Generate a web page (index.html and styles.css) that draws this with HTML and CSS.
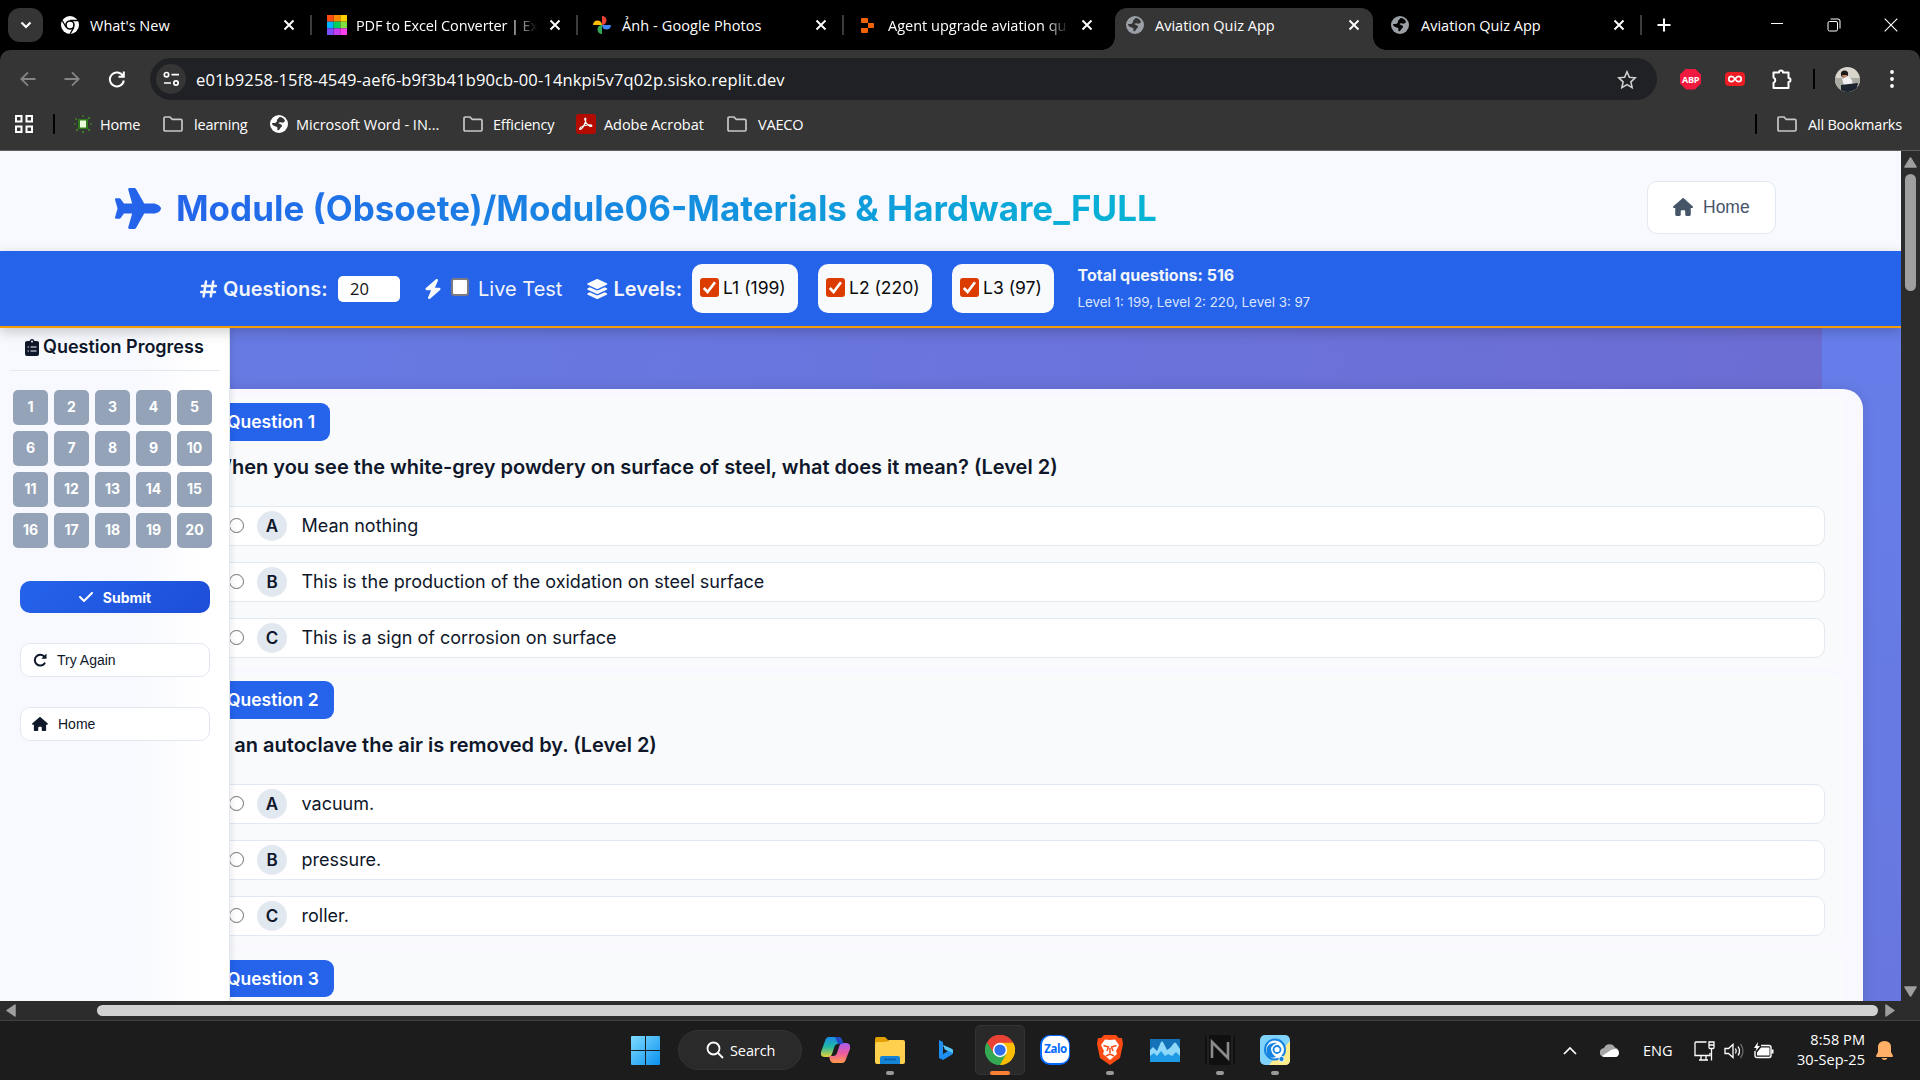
FILE: index.html
```html
<!DOCTYPE html>
<html lang="en">
<head>
<meta charset="utf-8">
<title>Aviation Quiz App</title>
<link rel="stylesheet" href="styles.css">
</head>
<body>
<svg class="defs" width="0" height="0">
  <defs>
    <symbol id="close" viewBox="0 0 12 12"><path d="M1.5 1.5l9 9M10.5 1.5l-9 9" stroke="currentColor" stroke-width="1.9" fill="none"/></symbol>
    <symbol id="folder" viewBox="0 0 20 16"><path d="M1 2.2Q1 1 2.2 1H7l2.2 2.3h8.6Q19 3.300 19 4.500V13.700Q19 15 17.800 15H2.200Q1 15 1 13.700Z" fill="none" stroke="#c7c7c7" stroke-width="1.7"/></symbol>
    <symbol id="globe" viewBox="0 0 18 18"><circle cx="9" cy="9" r="9" fill="currentColor"/><path d="M9.500 2c3 0 5 2 5.500 4-1 1.500-2.500 2-3.500 1.500S9 7 8.500 8c0 1 3 .8 3.500 2.500.3 1.500-1.500 1.800-2 3-.4 1.200-1.300 2-2.500 1.800C7 14 8 13 7 12c-1.500-1-4-1-5-3 0-1.500 1-1 2.500-1S7 7 7 5.500 8 4 9.500 2z" fill="var(--cut)"/></symbol>
    <symbol id="plane" viewBox="0 0 576 512"><path fill="currentColor" d="M482.3 192c34.2 0 93.7 29 93.7 64c0 36-59.5 64-93.7 64l-116.6 0L265.2 495.900c-5.700 10-16.300 16.100-27.800 16.100l-56.200 0c-10.600 0-18.300-10.200-15.400-20.400l49-171.600L112 320 68.800 377.600c-3 4-7.800 6.400-12.800 6.400l-42 0c-7.800 0-14-6.300-14-14c0-1.300 .2-2.600 .5-3.900L32 256 .5 145.900c-.4-1.300-.5-2.600-.5-3.900c0-7.800 6.300-14 14-14l42 0c5 0 9.800 2.400 12.800 6.400L112 192l102.900 0-49-171.600C162.900 10.200 170.600 0 181.200 0l56.200 0c11.500 0 22.100 6.200 27.800 16.100L365.700 192l116.600 0z"/></symbol>
    <symbol id="house" viewBox="0 0 576 512"><path fill="currentColor" d="M575.8 255.500c0 18-15 32.100-32 32.100h-32l.7 160.200c0 2.700-.2 5.400-.5 8.100V472c0 22.100-17.900 40-40 40H392c-22.100 0-40-17.900-40-40V384c0-17.700-14.300-32-32-32H256c-17.700 0-32 14.300-32 32v88c0 22.100-17.900 40-40 40H104c-22.100 0-40-17.900-40-40V287.600H32c-18 0-32-14-32-32.100c0-9 3-17 10-24L266.400 8c7-7 15-8 22-8s15 2 21 7L564.800 231.500c8 7 12 15 11 24z"/></symbol>
    <symbol id="check" viewBox="0 0 448 512"><path fill="currentColor" d="M438.600 105.400c12.500 12.500 12.500 32.800 0 45.300l-256 256c-12.500 12.500-32.800 12.500-45.300 0l-128-128c-12.500-12.500-12.500-32.800 0-45.300s32.800-12.500 45.300 0L160 338.700 393.400 105.400c12.500-12.500 32.800-12.500 45.300 0z"/></symbol>
    <symbol id="tick" viewBox="0 0 19 19"><rect width="19" height="19" rx="3" fill="#dc3c00"/><path d="M3.800 10l3.800 4L15 4.300" fill="none" stroke="#fff" stroke-width="2.700"/></symbol>
    <symbol id="chrome" viewBox="0 0 48 48"><path d="M24 24L3.200 12A24 24 0 0 1 44.800 12Z" fill="#ea4335"/><path d="M24 24L44.800 12A24 24 0 0 1 24 48Z" fill="#fbbc04"/><path d="M24 24V48A24 24 0 0 1 3.200 12Z" fill="#34a853"/><path d="M24 12.500H45A24 24 0 0 0 3.200 12L14 30Z" fill="#ea4335"/><path d="M34 30L24 48A24 24 0 0 0 45 12.500H24Z" fill="#fbbc04"/><path d="M14 30L3.200 12A24 24 0 0 0 24 48L34 30Z" fill="#34a853"/><circle cx="24" cy="24" r="11.500" fill="#fff"/><circle cx="24" cy="24" r="9" fill="#2f6fed"/></symbol>
  </defs>
</svg>

<div class="browser">
  <div class="tabstrip">
    <button class="tab-search"><svg width="12" height="8" viewBox="0 0 12 8"><path d="M1.500 1.500L6 6l4.500-4.500" fill="none" stroke="#fff" stroke-width="2.200"/></svg></button>
    <div class="tab"><svg class="fav" viewBox="0 0 18 18"><circle cx="9" cy="9" r="9" fill="#fff"/><path d="M9 4.500h8M5.100 11.300L1.200 4.500M12.900 11.300L9 18" stroke="#000" stroke-width="1.300"/><circle cx="9" cy="9" r="4" fill="#fff" stroke="#000" stroke-width="1.600"/></svg><span class="name">What's New</span><svg class="x"><use href="#close"/></svg></div>
    <div class="tab"><svg class="fav wide" viewBox="0 0 3 3"><path fill="#ff4a12" d="M0 0h1v1H0z"/><path fill="#ff8a00" d="M1 0h1v1H1z"/><path fill="#ffd000" d="M2 0h1v1H2z"/><path fill="#00b4ff" d="M0 1h1v1H0z"/><path fill="#00d060" d="M1 1h1v1H1z"/><path fill="#80e040" d="M2 1h1v1H2z"/><path fill="#7a4dff" d="M0 2h1v1H0z"/><path fill="#c53df0" d="M1 2h1v1H1z"/><path fill="#ff40f0" d="M2 2h1v1H2z"/></svg><span class="name fade pdf">PDF to Excel Converter | Ex</span><svg class="x"><use href="#close"/></svg></div>
    <div class="tab"><svg class="fav" viewBox="0 0 18 18"><path fill="#ea4335" d="M9 0a4.500 4.500 0 0 1 0 9z"/><path fill="#4285f4" d="M18 9a4.500 4.500 0 0 1-9 0z"/><path fill="#34a853" d="M9 18a4.500 4.500 0 0 1 0-9z"/><path fill="#fbbc04" d="M0 9a4.500 4.500 0 0 1 9 0z"/></svg><span class="name photos">Ảnh - Google Photos</span><svg class="x"><use href="#close"/></svg></div>
    <div class="tab last"><svg class="fav" viewBox="0 0 18 18"><path fill="#f26207" d="M3 2h5q1 0 1 1v4H3q-1 0-1-1V3q0-1 1-1zM9 7h5q1 0 1 1v3q0 1-1 1H9zM2 12h7v4q0 1-1 1H3q-1 0-1-1z"/></svg><span class="name fade">Agent upgrade aviation qu</span><svg class="x"><use href="#close"/></svg></div>
    <div class="tab active"><svg class="fav gray"><use href="#globe"/></svg><span class="name">Aviation Quiz App</span><svg class="x"><use href="#close"/></svg></div>
    <div class="tab"><svg class="fav gray dark"><use href="#globe"/></svg><span class="name inset">Aviation Quiz App</span><svg class="x"><use href="#close"/></svg></div>
    <svg class="plus" width="14" height="14" viewBox="0 0 14 14"><path d="M7 .5v13M.5 7h13" stroke="#fff" stroke-width="2"/></svg>
    <div class="winctl">
      <svg width="14" height="14" viewBox="0 0 14 14"><path d="M1 5.500h12" stroke="#fff"/></svg>
      <svg width="14" height="14" viewBox="0 0 14 14"><rect x="1" y="3.500" width="9.500" height="9.500" rx="1.500" fill="none" stroke="#fff"/><path d="M3.500 1h7.500q2 0 2 2v7.500" fill="none" stroke="#fff"/></svg>
      <svg width="14" height="14" viewBox="0 0 14 14"><path d="M.7.7l12.600 12.600M13.300.7L.7 13.300" stroke="#fff" stroke-width="1.100"/></svg>
    </div>
  </div>

  <div class="toolbar">
    <div class="nav">
      <svg width="16" height="16" viewBox="0 0 16 16"><path d="M15.500 8H1.500M8 1.300L1.300 8 8 14.700" fill="none" stroke="#858585" stroke-width="1.800"/></svg>
      <svg width="16" height="16" viewBox="0 0 16 16"><path d="M.5 8h14M8 1.300L14.700 8 8 14.700" fill="none" stroke="#858585" stroke-width="1.800"/></svg>
      <svg width="18" height="18" viewBox="0 0 18 18"><path d="M15 6A7 7 0 1 0 15.800 10.500M15.800 1.500V6.700H10.500" fill="none" stroke="#fff" stroke-width="2"/></svg>
    </div>
    <div class="omnibox">
      <span class="siteinfo"><svg width="17" height="16" viewBox="0 0 17 16"><g fill="none" stroke="#fff" stroke-width="1.700"><circle cx="3.500" cy="3.700" r="2.200"/><path d="M8.500 3.700H16M1 12H8"/><circle cx="13" cy="12" r="2.200"/></g></svg></span>
      <span class="url">e01b9258-15f8-4549-aef6-b9f3b41b90cb-00-14nkpi5v7q02p.sisko.replit.dev</span>
      <svg class="star" width="20" height="19" viewBox="0 0 20 19"><path d="M10 1.800l2.400 5.400 5.900.6-4.400 4 1.200 5.800L10 14.600l-5.100 3 1.200-5.800-4.400-4 5.900-.6z" fill="none" stroke="#d0d0d0" stroke-width="1.600"/></svg>
    </div>
    <div class="ext">
      <span class="abp">ABP</span>
      <span class="inf"><svg width="14" height="8" viewBox="0 0 14 8"><path d="M7 4C5.500 2 4.800 1.300 3.500 1.300a2.600 2.600 0 0 0 0 5.400C4.800 6.700 5.500 6 7 4s2.200-2.700 3.500-2.700a2.600 2.600 0 0 1 0 5.400C9.200 6.700 8.500 6 7 4z" fill="none" stroke="#fff" stroke-width="1.700"/></svg></span>
      <svg class="puzzle" width="22" height="22" viewBox="0 0 22 22"><path d="M2.500 4.500h5.500a2 2 0 0 1 4 0h5.500v5.500a2 2 0 0 1 0 4v6h-15v-5a3 3 0 0 0 0-5.500z" fill="none" stroke="#fff" stroke-width="2" stroke-linejoin="round"/></svg>
      <i class="vline"></i>
      <svg class="avatar" width="25" height="25" viewBox="0 0 25 25"><clipPath id="av"><circle cx="12.500" cy="12.500" r="12.500"/></clipPath><g clip-path="url(#av)"><path fill="#d8d5cd" d="M0 0h25v25H0z"/><path fill="#a9aba3" d="M0 11h25v14H0z"/><circle cx="9.500" cy="7" r="3.600" fill="#1d1815"/><path d="M7 8h5l1 5-4 2z" fill="#b98667"/><path d="M7 12l6-3 4 4 1 6-8 2z" fill="#f1f1f1"/><path d="M6 18l8-1 9-1-2 9H6z" fill="#1c2430"/></g></svg>
      <svg class="dots" width="4" height="20" viewBox="0 0 4 20"><g fill="#fff"><circle cx="2" cy="3" r="1.900"/><circle cx="2" cy="10" r="1.900"/><circle cx="2" cy="17" r="1.900"/></g></svg>
    </div>
  </div>

  <div class="bookmarks">
    <svg class="apps" width="18" height="18" viewBox="0 0 18 18"><g fill="none" stroke="#fff" stroke-width="2"><path d="M1 1h5.500v5.500H1zM11.500 1H17v5.500h-5.500zM1 11.500h5.500V17H1zM11.500 11.500H17V17h-5.500z"/></g></svg>
    <i class="vline"></i>
    <span class="bm b-home"><svg width="20" height="20" viewBox="0 0 20 20"><g fill="#3f7d29"><circle cx="3" cy="5" r="1.100"/><circle cx="10" cy="2" r=".9"/><circle cx="16" cy="4" r="1.200"/><circle cx="18" cy="10" r=".9"/><circle cx="16" cy="16" r="1.200"/><circle cx="10" cy="18" r="1.200"/><circle cx="4" cy="16" r="1.200"/><circle cx="2" cy="10" r=".9"/></g><path fill="#2f7a1a" d="M5 5h10v10H5z"/><path fill="#eaffd9" d="M7 6.500h6v7H7z"/></svg>Home</span>
    <span class="bm b-learn"><svg width="20" height="16"><use href="#folder"/></svg>learning</span>
    <span class="bm b-word"><svg class="white" width="18" height="18"><use href="#globe"/></svg>Microsoft Word - IN...</span>
    <span class="bm b-eff"><svg width="20" height="16"><use href="#folder"/></svg>Efficiency</span>
    <span class="bm b-adobe"><svg width="20" height="20" viewBox="0 0 20 20"><rect width="20" height="20" rx="3" fill="#b30b00"/><path d="M4.300 15.500c1.500 0 5.500-6 5.500-10 0-2-1.300-1.500-1 0 .7 4 4.500 7.500 6.700 6.700 1.300-.7-1-1.700-4-1.200-3 .4-7 2-7.700 3.400-.3.700 0 1.100.5 1.100z" fill="none" stroke="#fff" stroke-width="1.200"/></svg>Adobe Acrobat</span>
    <span class="bm b-vaeco"><svg width="20" height="16"><use href="#folder"/></svg>VAECO</span>
    <span class="allbm"><i class="vline"></i><svg width="20" height="16"><use href="#folder"/></svg><span>All Bookmarks</span></span>
  </div>
</div>

<div class="viewport">
  <div class="page">
    <header class="hero">
      <svg class="plane"><use href="#plane"/></svg>
      <h1>Module (Obsoete)/Module06-Materials &amp; Hardware_FULL</h1>
      <a class="homebtn"><svg width="20" height="18"><use href="#house"/></svg>Home</a>
    </header>

    <div class="controls">
      <svg class="hash" width="17" height="18" viewBox="0 0 17 18"><path d="M6 1.500L3.600 16.500M13.200 1.500L10.800 16.500M2 6h14M1 12h14" stroke="#f1f5f9" stroke-width="2.500" stroke-linecap="round"/></svg>
      <b class="lbl q">Questions:</b>
      <span class="num">20</span>
      <svg class="bolt" width="18" height="20" viewBox="0 0 448 512"><path fill="#f8fafc" d="M349.400 44.600c5.900-13.700 1.500-29.700-10.600-38.500s-28.600-8-39.900 1.800l-256 224C32.900 240.600 29.300 254.500 34 266.700S50.900 288 64 288h111.500L98.600 467.400c-5.900 13.700-1.500 29.700 10.600 38.500s28.600 8 39.900-1.800l256-224c10-8.800 13.600-22.600 8.900-34.900S397.100 224 384 224H272.500L349.400 44.600z"/></svg>
      <span class="box"></span>
      <span class="lbl live">Live Test</span>
      <svg class="layers" width="22.500" height="20" viewBox="0 0 576 512"><path fill="#f8fafc" d="M264.500 5.200c14.900-6.900 32.100-6.900 47 0l218.600 101c8.500 3.900 13.900 12.400 13.900 21.800s-5.400 17.900-13.900 21.800l-218.600 101c-14.900 6.900-32.100 6.900-47 0L45.900 149.800C37.400 145.800 32 137.300 32 128s5.400-17.900 13.900-21.800L264.500 5.200zM476.900 209.600l53.200 24.600c8.500 3.900 13.900 12.400 13.900 21.800s-5.400 17.900-13.900 21.800l-218.600 101c-14.900 6.900-32.100 6.900-47 0L45.900 277.800C37.400 273.800 32 265.300 32 256s5.400-17.900 13.900-21.800l53.200-24.600 152 70.200c23.400 10.800 50.400 10.800 73.800 0l152-70.200zm-152 198.200l152-70.200 53.200 24.600c8.500 3.900 13.900 12.400 13.900 21.800s-5.400 17.900-13.900 21.800l-218.600 101c-14.900 6.900-32.100 6.900-47 0L45.900 405.800C37.400 401.800 32 393.300 32 384s5.400-17.900 13.900-21.800l53.200-24.600 152 70.200c23.400 10.800 50.400 10.800 73.800 0z"/></svg>
      <b class="lbl lv">Levels:</b>
      <span class="level l1"><svg width="19" height="19"><use href="#tick"/></svg>L1 (199)</span>
      <span class="level l2"><svg width="19" height="19"><use href="#tick"/></svg>L2 (220)</span>
      <span class="level l3"><svg width="19" height="19"><use href="#tick"/></svg>L3 (97)</span>
      <div class="totals"><b>Total questions: 516</b><small>Level 1: 199, Level 2: 220, Level 3: 97</small></div>
    </div>

    <div class="body">
      <aside class="sidebar">
        <h2><svg width="14" height="18" viewBox="0 0 14 18"><path d="M2 3h2.500a2.600 2.600 0 0 1 5 0H12q2 0 2 2v11q0 2-2 2H2q-2 0-2-2V5q0-2 2-2z" fill="#0f172a"/><circle cx="7" cy="3.400" r="1" fill="#f8f9fe"/><path d="M5.500 9h6M5.500 13h6M2.600 9h1.300M2.600 13h1.300" stroke="#f8f9fe" stroke-width="1.100"/></svg>Question Progress</h2>
        <div class="grid">
          <span>1</span><span>2</span><span>3</span><span>4</span><span>5</span>
          <span>6</span><span>7</span><span>8</span><span>9</span><span>10</span>
          <span>11</span><span>12</span><span>13</span><span>14</span><span>15</span>
          <span>16</span><span>17</span><span>18</span><span>19</span><span>20</span>
        </div>
        <button class="submit"><svg width="14" height="16"><use href="#check"/></svg>Submit</button>
        <button class="side again"><svg width="14" height="14" viewBox="0 0 14 14"><path d="M11.600 10.300A5.400 5.400 0 1 1 11 3.300" fill="none" stroke="#0f172a" stroke-width="2" stroke-linecap="round"/><path d="M13.500.6v5.200H8.300z" fill="#0f172a"/></svg>Try Again</button>
        <button class="side"><svg width="16" height="14"><use href="#house"/></svg>Home</button>
      </aside>
      <main class="main">
        <div class="band"></div>
        <div class="card">
          <section class="question">
            <span class="badge">Question 1</span>
            <h3>When you see the white-grey powdery on surface of steel, what does it mean? (Level 2)</h3>
            <div class="opt"><i class="radio"></i><b>A</b>Mean nothing</div>
            <div class="opt"><i class="radio"></i><b>B</b>This is the production of the oxidation on steel surface</div>
            <div class="opt"><i class="radio"></i><b>C</b>This is a sign of corrosion on surface</div>
          </section>
          <section class="question">
            <span class="badge">Question 2</span>
            <h3>In an autoclave the air is removed by. (Level 2)</h3>
            <div class="opt"><i class="radio"></i><b>A</b>vacuum.</div>
            <div class="opt"><i class="radio"></i><b>B</b>pressure.</div>
            <div class="opt"><i class="radio"></i><b>C</b>roller.</div>
          </section>
          <section class="question">
            <span class="badge">Question 3</span>
          </section>
        </div>
      </main>
    </div>
  </div>
  <div class="vscroll">
    <svg width="13" height="11" viewBox="0 0 13 11"><path d="M6.500 1L12 10H1z" fill="#9f9f9f" stroke="#9f9f9f" stroke-linejoin="round" stroke-width="1.500"/></svg>
    <i></i>
    <svg class="dn" width="13" height="11" viewBox="0 0 13 11"><path d="M6.500 10L12 1H1z" fill="#9f9f9f" stroke="#9f9f9f" stroke-linejoin="round" stroke-width="1.500"/></svg>
  </div>
</div>
<div class="hscroll">
  <svg width="10" height="13" viewBox="0 0 10 13"><path d="M1 6.500L9 1v11z" fill="#9f9f9f" stroke="#9f9f9f" stroke-linejoin="round" stroke-width="1.500"/></svg>
  <i></i>
  <svg width="10" height="13" viewBox="0 0 10 13"><path d="M9 6.500L1 1v11z" fill="#9f9f9f" stroke="#9f9f9f" stroke-linejoin="round" stroke-width="1.500"/></svg>
</div>

<footer class="taskbar">
  <div class="apps-row">
    <svg class="win" width="29" height="29" viewBox="0 0 29 29"><linearGradient id="w" x1="0" y1="0" x2="1" y2="1" gradientUnits="objectBoundingBox"><stop offset="0" stop-color="#7fdcff"/><stop offset="1" stop-color="#0a90ee"/></linearGradient><path fill="url(#w)" d="M1 0h13v14H0V1q0-1 1-1zM15 0h13q1 0 1 1v13H15zM0 15h14v14H1q-1 0-1-1zM15 15h14v13q0 1-1 1H15z"/></svg>
    <div class="search"><svg width="18" height="18" viewBox="0 0 18 18"><circle cx="7.500" cy="7.500" r="6" fill="none" stroke="#fff" stroke-width="1.800"/><path d="M12 12l5 5" stroke="#fff" stroke-width="1.800"/></svg>Search</div>
    <span class="app"><svg width="29" height="26" viewBox="0 0 29 26"><linearGradient id="c1" x1="0" y1="0" x2="0" y2="1"><stop offset="0" stop-color="#1a8be8"/><stop offset=".5" stop-color="#22b8a0"/><stop offset="1" stop-color="#e8d23a"/></linearGradient><linearGradient id="c2" x1="0" y1="0" x2="0" y2="1"><stop offset="0" stop-color="#a95cf0"/><stop offset=".5" stop-color="#ec5aa0"/><stop offset="1" stop-color="#ff9a4a"/></linearGradient><path d="M8 0h9q3 0 4 3l1 4h-5q-3 0-4 4l-2 6q-1 3-4 3H4q-5 0-4-5L4 4q1-4 4-4z" fill="url(#c1)"/><path d="M21 26h-9q-2 0-3-3l-1-4h4q3 0 4-3l2-6q1-4 4-4h3q5 0 4 6l-4 10q-1 4-4 4z" fill="url(#c2)"/><path d="M14 0h3q3 0 4 3l1 4h-5z" fill="#2149c4"/></svg></span>
    <span class="app run"><svg width="30" height="27" viewBox="0 0 30 27"><path d="M0 2q0-2 2-2h8l3 3-2 5H0z" fill="#e2a100"/><path d="M2 5h9l3-2h14q2 0 2 2v20q0 2-2 2H2q-2 0-2-2V7q0-2 2-2z" fill="#ffd04d"/><path d="M7 19h16q2 0 2 2v6H5v-6q0-2 2-2z" fill="#1583d6"/><path d="M9 22.500h12" stroke="#0b5fa8" stroke-width="1.500"/></svg></span>
    <span class="app"><svg width="15" height="21" viewBox="0 0 15 21"><path d="M1 0l4 2v12l5-3-3-1.500L5 5l9 4q1 .5 1 2v2q0 1-1 1.600L5 20 1 18z" fill="#1e8ff0"/><path d="M5 5l9 4q1 .5 1 2v2l-8-3.500z" fill="#59c6f2"/></svg></span>
    <span class="app current"><svg width="30" height="30"><use href="#chrome"/></svg></span>
    <span class="app"><span class="zalo">Zalo</span></span>
    <span class="app run"><svg width="26" height="30" viewBox="0 0 26 30"><path d="M7 0h12l3 3 3 0 1 6-3 14-10 7-10-7L0 9l1-6h3z" fill="#fb4b14"/><path d="M13 5l5-.5 4 5.500-3 6 1 3-7 6-7-6 1-3-3-6 4-5.500z" fill="#fff"/><path d="M6.500 10.500l5 1.500-1.500 4M19.500 10.500l-5 1.500 1.500 4M13 13v5M9 21l4-2 4 2" fill="none" stroke="#fb4b14" stroke-width="1.500"/></svg></span>
    <span class="app"><svg width="30" height="23" viewBox="0 0 30 23"><path fill="#1472b8" d="M0 0h30v23H0z"/><path d="M0 11l3-3 4 4 4-9q1-1 2 0l4 8 3-2 4-5q1-1 2 0l4 6v13H0z" fill="#8ed8fa"/><path d="M0 17l4-3 3 3 4-5 4 5 3-2 4 2 4-4 4 4v6H0z" fill="#1e9be4"/></svg></span>
    <span class="app run"><svg width="30" height="30" viewBox="0 0 30 30"><rect width="30" height="30" rx="3" fill="#101010"/><path d="M3 0v30M27 0v30" stroke="#333"/><path d="M7 23V7l16 16V7" fill="none" stroke="#8b8b8b" stroke-width="2.600"/></svg></span>
    <span class="app run"><svg width="30" height="30" viewBox="0 0 30 30"><rect width="30" height="30" rx="5" fill="#7fd3fb"/><path d="M30 6v19q0 5-5 5H9z" fill="#ffec8a"/><circle cx="15" cy="14.500" r="10" fill="#fff" stroke="#1683e0" stroke-width="2"/><path d="M8 21q-4-8 2-12 5-2 7-1-4 1-6 5 0 6 5 9-5 2-8-1z" fill="#1683e0"/><circle cx="17" cy="14.500" r="3.500" fill="none" stroke="#1683e0" stroke-width="1.800"/><circle cx="21.500" cy="24" r="2.700" fill="#1683e0" stroke="#fff"/></svg></span>
  </div>
  <div class="tray">
    <svg class="t-chev" width="14" height="9" viewBox="0 0 14 9"><path d="M1 8l6-6 6 6" fill="none" stroke="#fff" stroke-width="1.700"/></svg>
    <svg class="t-cloud" width="20" height="13" viewBox="0 0 20 13"><path d="M4.500 13A4.500 4.500 0 0 1 4 4a6 6 0 0 1 11-.5 5 5 0 0 1 .5 9.500z" fill="#a6a6a6"/><path d="M2 12l9-6q3-1.500 5-1a4.200 4.200 0 0 1 0 8H4.500Q3 13 2 12z" fill="#fff"/></svg>
    <span class="eng">ENG</span>
    <svg class="t-net" width="21" height="20" viewBox="0 0 21 20"><path d="M12.500 1H2Q1 1 1 2v12.500h15V12M5 19h9M7 15v4M12 15v4" fill="none" stroke="#fff" stroke-width="1.300"/><path d="M15 1h5v5.500q0 1-1 1h-3q-1 0-1-1zM15 4h5M17.500 7.500V19.500" fill="none" stroke="#fff" stroke-width="1.300"/></svg>
    <svg class="t-vol" width="20" height="16" viewBox="0 0 20 16"><path d="M1 5.500h3.500L9 1.500v13L4.500 10.500H1z" fill="none" stroke="#fff" stroke-width="1.300"/><path d="M11.500 5.500q1.500 2.500 0 5M14 3.500q3 4.500 0 9" fill="none" stroke="#fff" stroke-width="1.300"/><path d="M16.500 1q5 7 0 14" fill="none" stroke="#666" stroke-width="1.300"/></svg>
    <svg class="t-bat" width="20" height="17" viewBox="0 0 20 17"><path d="M7 3.500h8q2 0 2 2v8q0 2-2 2H3q-2 0-2-2V9" fill="none" stroke="#fff" stroke-width="1.400"/><path d="M7 5.500h8.500v8H3v-3zM17.500 7.500h2v4h-2zM4 0L0 6h2.500L1.500 9.500 6 4H3.500z" fill="#fff"/></svg>
    <div class="clock">8:58 PM<br>30-Sep-25</div>
    <svg class="t-bell" width="17" height="19" viewBox="0 0 17 19"><path d="M8.500 0q6.500 0 6.500 6.500V11l2 4q0 1-1 1H1q-1 0-1-1l2-4V6.500Q2 0 8.500 0zM5.500 17h6q-1 2-3 2t-3-2z" fill="#ffb066"/></svg>
  </div>
</footer>
</body>
</html>
```
FILE: styles.css
```css
* { box-sizing: border-box; }
body {
  margin: 0;
  width: 1920px;
  height: 1080px;
  overflow: hidden;
  display: flex;
  flex-direction: column;
  background: #1c1c1c;
  font-family: "Open Sans", "Noto Sans", sans-serif;
}
svg { flex: none; display: block; }
.defs { position: absolute; }
button { border: 0; padding: 0; }

/* browser chrome */
.browser { height: 151px; flex: none; background: #000; border-bottom: 1px solid #5f6061; color: #fff; }
.tabstrip { height: 50px; display: flex; align-items: center; background: #000; }
.tab-search { width: 35px; height: 34px; margin: 0 3px 0 8px; border-radius: 12px; background: #353535; display: flex; align-items: center; justify-content: center; }
.tab { position: relative; width: 266px; height: 42px; align-self: flex-end; flex: none; display: flex; align-items: center; padding: 0 17px 0 15px; font-size: 14.5px; }
.tab::after { content: ""; position: absolute; right: 0; top: 7px; width: 2px; height: 20px; background: #3c3c3c; }
.fav { width: 18px; height: 18px; margin-bottom: 8px; --cut: #353535; }
.fav.wide { width: 20px; height: 20px; margin-right: -2px; }
.gray { color: #9aa0a6; }
.gray.dark { --cut: #000; }
.white { color: #fff; --cut: #353535; }
.name { flex: 1; margin: 0 10px 6px 11px; white-space: nowrap; line-height: 22px; }
.name.fade { -webkit-mask-image: linear-gradient(90deg, #000 86%, transparent 99%); mask-image: linear-gradient(90deg, #000 86%, transparent 99%); }
.name.pdf { letter-spacing: -.1px; }
.name.photos { letter-spacing: .1px; }
.name.inset { margin-left: 12px; }
.x { width: 12px; height: 12px; margin-bottom: 8px; }
.tab.last::after, .tab.active::after { display: none; }
.tab.active { width: 258px; margin: 0 3px 0 5px; padding: 0 13px 0 11px; background: #353535; border-radius: 12px 12px 0 0; }
.tab.active::before { content: ""; position: absolute; left: -13px; right: -13px; bottom: 0; height: 13px; background: radial-gradient(circle at 0 0, transparent 12.500px, #353535 13px) left / 13px 13px no-repeat, radial-gradient(circle at 100% 0, transparent 12.500px, #353535 13px) right / 13px 13px no-repeat; }
.plus { margin-left: 15px; }
.winctl { margin-left: auto; margin-right: 22px; display: flex; gap: 43px; }

.toolbar { height: 58px; display: flex; align-items: center; background: #353535; border-radius: 10px 10px 0 0; }
.nav { width: 150px; padding-left: 20px; display: flex; align-items: center; gap: 28px; }
.omnibox { width: 1507px; height: 42px; border-radius: 21px; background: #202125; display: flex; align-items: center; padding: 0 20px 0 6px; }
.siteinfo { width: 30px; height: 30px; border-radius: 50%; background: #353535; display: flex; align-items: center; justify-content: center; }
.url { flex: 1; margin-left: 10px; font-size: 16.500px; letter-spacing: .13px; }
.ext { display: flex; align-items: center; margin-left: 23px; }
.abp { width: 21px; height: 21px; background: #f0193f; clip-path: polygon(29% 0, 71% 0, 100% 29%, 100% 71%, 71% 100%, 29% 100%, 0 71%, 0 29%); font: 700 9px/21px "Open Sans", sans-serif; text-align: center; letter-spacing: -.3px; }
.inf { width: 20px; height: 14px; margin-left: 24px; border-radius: 4px; background: #ee1c25; display: flex; align-items: center; justify-content: center; }
.puzzle { margin-left: 26px; }
.vline { display: block; width: 2px; height: 20px; background: #000; flex: none; }
.ext .vline { margin-left: 20px; }
.avatar { margin-left: 20px; }
.dots { margin-left: 30px; }

.bookmarks { height: 42px; display: flex; align-items: center; background: #353535; padding: 0 18px 10px 15px; font-size: 14.500px; letter-spacing: -.2px; }
.bookmarks .apps { margin-right: 20px; }
.bm { display: flex; align-items: center; gap: 8px; flex: none; white-space: nowrap; }
.b-home { margin-left: 18px; width: 90px; gap: 7px; }
.b-learn { width: 107px; gap: 11px; }
.b-word { width: 193px; letter-spacing: 0; }
.b-eff { width: 113px; gap: 10px; }
.b-adobe { width: 151px; letter-spacing: -.05px; }
.b-vaeco { gap: 11px; }
.allbm { display: flex; align-items: center; margin-left: auto; gap: 11px; white-space: nowrap; }
.allbm .vline { margin-right: 9px; }

/* page viewport */
.viewport { height: 850px; flex: none; display: flex; }
.page { width: 1901px; display: flex; flex-direction: column; overflow: hidden; font-family: Inter, sans-serif; }
.vscroll { width: 19px; background: #2c2c2c; display: flex; flex-direction: column; align-items: center; padding: 6px 0 4px; }
.vscroll i { width: 11px; height: 117px; margin-top: 6px; border-radius: 6px; background: #9f9f9f; }
.vscroll .dn { margin-top: auto; }
.hscroll { height: 20px; flex: none; background: #2c2c2c; border-bottom: 1px solid #404040; display: flex; align-items: center; padding: 0 24px 0 6px; }
.hscroll i { width: 1781px; height: 11px; margin: 0 7px 0 81px; border-radius: 6px; background: #d1d1d1; }

.hero { height: 100px; flex: none; background: #f8f9fe; display: flex; align-items: center; padding: 0 125px 0 115px; }
.plane { width: 46px; height: 41px; margin-top: 15px; color: #2563eb; }
.hero h1 { margin: 14px 0 0 14px; padding: 0 1px; font-size: 35px; line-height: 50px; font-weight: 700; background: linear-gradient(135deg, #2563eb, #06b6d4); -webkit-background-clip: text; background-clip: text; color: transparent; white-space: nowrap; }
.homebtn { margin: 12px 0 0 auto; width: 129px; height: 53px; border: 1px solid #e2e8f0; border-radius: 10px; background: #fff; display: flex; align-items: center; padding-left: 25px; gap: 10px; font: 17.500px "Liberation Sans", sans-serif; color: #475569; }

.controls { position: relative; z-index: 3; height: 77px; flex: none; background: #2563eb; border-bottom: 2px solid #f59e0b; box-shadow: 0 4px 12px rgba(0,0,0,.2); display: flex; align-items: center; padding-left: 200px; color: #f1f5f9; }
.lbl { font-size: 20px; line-height: 26px; white-space: nowrap; padding-top: 1px; }
.lbl.q { width: 115px; margin-left: 6px; font-weight: 600; }
.num { width: 62px; height: 26px; border-radius: 5px; background: #fff; color: #111; font: 16.500px/26px "Open Sans", sans-serif; padding-left: 12px; }
.bolt { margin-left: 24px; }
.box { width: 18px; height: 18px; margin: 0 9px 3px 9px; border: 2px solid #7a7a80; border-radius: 3px; background: #fff; }
.lbl.live { width: 108px; }
.layers { margin-right: 5px; }
.lbl.lv { width: 78px; font-weight: 600; }
.level { height: 49px; margin-right: 20px; border-radius: 10px; background: #f8fafc; color: #0b0b0b; display: flex; align-items: center; padding-left: 8px; padding-bottom: 3px; gap: 4.500px; font-size: 17.500px; white-space: nowrap; }
.l1 { width: 106px; }
.l2 { width: 114px; }
.l3 { width: 102px; margin-right: 24px; }
.totals { display: flex; flex-direction: column; gap: 6px; white-space: nowrap; }
.totals b { font-size: 16px; line-height: 21px; font-weight: 700; }
.totals small { font-size: 13.350px; line-height: 20px; color: #dbe6fb; }

.body { flex: 1; display: flex; min-height: 0; }
.sidebar { position: relative; z-index: 2; width: 230px; flex: none; background: linear-gradient(90deg, #f8f9fe 60%, #fff 88%); border-right: 1px solid #e2e8f0; box-shadow: 2px 0 6px rgba(0,0,0,.08); padding: 0 19px 0 20px; display: flex; flex-direction: column; }
.sidebar h2 { height: 43px; margin: 0 -10px; padding: 0 0 5px 15px; border-bottom: 1px solid #e2e8f0; display: flex; align-items: center; gap: 4px; font-size: 18px; font-weight: 600; color: #0f172a; white-space: nowrap; }
.grid { margin: 19px 0 33px -7px; display: grid; grid-template-columns: repeat(5, 35px); grid-auto-rows: 35px; gap: 6px; }
.grid span { border-radius: 5px; background: #94a3b8; color: #fff; font-size: 14px; font-weight: 700; line-height: 34px; text-align: center; }
.submit { height: 32px; margin-bottom: 30px; border-radius: 10px; background: linear-gradient(135deg, #2563eb, #1d4ed8); color: #fff; font: 700 14px Inter, sans-serif; display: flex; align-items: center; justify-content: center; gap: 10px; }
.side { height: 34px; margin-bottom: 30px; border: 1px solid #e2e8f0; border-radius: 10px; background: #fff; display: flex; align-items: center; padding-left: 11px; gap: 10px; font: 14px "Liberation Sans", sans-serif; color: #0f172a; }
.again { gap: 10px; padding-left: 12px; }

.main { flex: 1; min-width: 0; overflow: hidden; display: flex; flex-direction: column; background: linear-gradient(180deg, #667eea, #6877df); }
.band { width: 1592px; height: 61px; flex: none; background: linear-gradient(100deg, #677ae4, #6c6dd3); }
.card { width: 1673px; margin-left: -40px; flex: none; border-radius: 20px 20px 0 0; background: #f8f8fe; padding: 7px 19px 0; box-shadow: 0 0 14px rgba(0,0,0,.12); display: flex; flex-direction: column; gap: 7px; }
.question { height: 271px; border-radius: 12px; background: #f9fafc; padding: 7px 19px 0 2px; }
.badge { display: block; width: max-content; height: 37.500px; padding: 0 15px 0 16px; border-radius: 9px; background: #2563eb; color: #fff; font-size: 17.500px; line-height: 37px; font-weight: 600; }
.question:last-child { margin-top: .5px; }
.question h3 { margin: 12px 0 25px .5px; font-size: 20px; line-height: 28px; font-weight: 600; color: #0f172a; white-space: nowrap; }
.opt { height: 40px; margin-bottom: 16px; border: 1px solid #e2e8f0; border-radius: 10px; background: #fff; display: flex; align-items: center; padding-left: 17px; font-size: 18px; color: #0f172a; }
.radio { width: 15px; height: 15px; border: 1.300px solid #6e6e6e; border-radius: 50%; background: #fff; }
.opt b { width: 30px; height: 30px; margin: 0 14.500px 0 13px; border-radius: 50%; background: #e2e8f0; font-size: 17px; font-weight: 600; line-height: 30px; text-align: center; }

/* taskbar */
.taskbar { flex: 1; background: #1c1c1c; display: flex; justify-content: space-between; color: #fff; }
.apps-row { display: flex; align-items: center; padding-left: 631px; height: 58px; }
.search { width: 124px; height: 40px; margin: 0 8px 0 18px; border-radius: 20px; border: 1px solid #333; background: #2a2a2a; display: flex; align-items: center; padding-left: 27px; gap: 6px; font-size: 14.500px; letter-spacing: -.1px; }
.app { position: relative; width: 50px; height: 50px; margin-right: 5px; display: flex; align-items: center; justify-content: center; }
.app.run::after, .app.current::after { content: ""; position: absolute; bottom: 0; left: 21px; width: 8px; height: 4px; border-radius: 2px; background: #999; }
.app.current { background: #292929; border-radius: 5px; border: 1px solid #333; }
.app.current::after { left: 14px; width: 20px; bottom: -1px; background: #ff8033; }
.zalo { width: 30px; height: 30px; border-radius: 10px; background: #fff; border: 1px solid #0068ff; border-left-width: 2px; border-bottom-width: 2px; color: #0068ff; font-size: 11.500px; font-weight: 700; line-height: 26px; text-align: center; letter-spacing: -.4px; }
.tray { display: flex; align-items: center; padding-right: 27px; height: 59px; }
.t-chev { margin-right: 23px; }
.t-cloud { margin-right: 23px; }
.eng { width: 29px; margin: 0 22px 1px 0; font-size: 14.500px; }
.t-net { margin-right: 9px; }
.t-vol { margin-right: 10px; }
.t-bat { margin-right: 7px; }
.clock { width: 84px; margin: 0 11px 1px 0; font-size: 14.500px; line-height: 20px; text-align: right; letter-spacing: .06px; white-space: nowrap; }
```
